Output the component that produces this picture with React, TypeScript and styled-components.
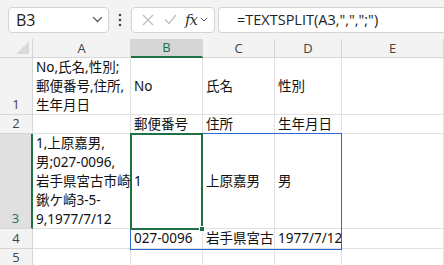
import styled, { createGlobalStyle } from "styled-components";

const Global = createGlobalStyle`
	html, body {
		margin: 0;
		padding: 0;
		background: #ffffff;
		overflow: hidden;
	}
	* { box-sizing: border-box; }
`;

const Page = styled.div`
	width: 444px;
	height: 265px;
	overflow: hidden;
	font-family: "Noto Sans", "Noto Sans CJK JP", sans-serif;
`;

const Toolbar = styled.div`
	height: 39px;
	background: #f3f3f3;
	display: flex;
	align-items: center;
	padding: 0 0 0 8px;
	font-family: "Open Sans", "Noto Sans", sans-serif;
`;

const Box = styled.div<{ $w?: number }>`
	height: 26px;
	width: ${(p) => (p.$w ? `${p.$w}px` : "auto")};
	flex: ${(p) => (p.$w ? "none" : "1 1 0")};
	min-width: 0;
	background: #ffffff;
	border: 1px solid #d4d4d4;
	border-radius: 4px;
	display: flex;
	align-items: center;
	overflow: hidden;
`;

const NameText = styled.span`
	font-size: 16px;
	color: #222;
	padding-left: 7px;
	flex: 1;
`;

const Dots = styled.div`
	width: 22px;
	flex: none;
	display: flex;
	justify-content: center;
`;

const FuncBox = styled(Box)`
	padding-left: 5px;
	margin-right: 3px;
`;

const IconSlot = styled.div<{ $w: number }>`
	width: ${(p) => p.$w}px;
	flex: none;
	display: flex;
	align-items: center;
	justify-content: center;
`;

const Fx = styled.span`
	font-family: "DejaVu Serif", "Liberation Serif", serif;
	font-style: italic;
	font-size: 15px;
	color: #333;
	letter-spacing: -1px;
	margin-left: 4px;
`;

const FormulaBox = styled(Box)`
	border-right: none;
	border-radius: 4px 0 0 4px;
	padding-left: 18px;
`;

const FormulaText = styled.span`
	font-size: 14.5px;
	color: #222;
	white-space: nowrap;
`;

const Grid = styled.div`
	display: grid;
	grid-template-columns: 33px 98px 72px 72px 67px 1fr;
	grid-template-rows: 19px 57px 19px 95px 20px 19px;
`;

type Pos = { $c: number; $r: number; $sel?: boolean };

const ColHead = styled.div<Pos>`
	grid-column: ${(p) => p.$c};
	grid-row: ${(p) => p.$r};
	background: ${(p) => (p.$sel ? "#d6d6d6" : "#f3f3f3")};
	color: ${(p) => (p.$sel ? "#1e7145" : "#444")};
	border-right: 1px solid #d6d6d6;
	border-bottom: ${(p) => (p.$sel ? "2px solid #1e7145" : "1px solid #d6d6d6")};
	font-family: "Open Sans", "Noto Sans", sans-serif;
	font-size: 13px;
	display: flex;
	align-items: center;
	justify-content: center;
	line-height: 1;
`;

const Corner = styled.div`
	grid-column: 1;
	grid-row: 1;
	background: #f3f3f3;
	border-right: 1px solid #d6d6d6;
	border-bottom: 1px solid #d6d6d6;
	display: flex;
	align-items: flex-end;
	justify-content: flex-end;
	padding: 0 3px 3px 0;
`;

const RowHead = styled.div<Pos>`
	grid-column: ${(p) => p.$c};
	grid-row: ${(p) => p.$r};
	background: ${(p) => (p.$sel ? "#e0e0e0" : "#f3f3f3")};
	color: ${(p) => (p.$sel ? "#1e7145" : "#444")};
	border-right: ${(p) => (p.$sel ? "2px solid #1e7145" : "1px solid #d6d6d6")};
	border-bottom: 1px solid #d6d6d6;
	font-family: "Open Sans", "Noto Sans", sans-serif;
	font-size: 13px;
	display: flex;
	align-items: flex-end;
	justify-content: center;
	padding-bottom: 1px;
	line-height: 17px;
`;

const Cell = styled.div<Pos>`
	grid-column: ${(p) => p.$c};
	grid-row: ${(p) => p.$r};
	border-right: 1px solid #e1e1e1;
	border-bottom: 1px solid #e1e1e1;
	font-size: 13.5px;
	line-height: 19px;
	color: #111;
	padding: 0 0 0 3px;
	display: flex;
	flex-direction: column;
	justify-content: center;
	white-space: nowrap;
	overflow: hidden;
`;

const Spill = styled.div`
	grid-column: 3 / 6;
	grid-row: 4 / 6;
	border: 1px solid #2c68d4;
	margin: -1px 0 -1px -1px;
	pointer-events: none;
	z-index: 1;
`;

const Active = styled.div`
	grid-column: 3 / 4;
	grid-row: 4 / 5;
	border: 2px solid #1e7145;
	margin: -1px 0 -1px -1px;
	position: relative;
	pointer-events: none;
	z-index: 2;
`;

const Handle = styled.div`
	position: absolute;
	right: -4px;
	bottom: -4px;
	width: 6px;
	height: 6px;
	background: #1e7145;
	border: 1px solid #fff;
`;

const Chevron = ({ size = 10 }: { size?: number }) => (
	<svg width={size} height={size * 0.6} viewBox="0 0 10 6">
		<path d="M1 1 L5 5 L9 1" fill="none" stroke="#555" strokeWidth="1.2" />
	</svg>
);

const cols = ["A", "B", "C", "D", "E"];

const rows: { n: string; cells: string[][] }[] = [
	{
		n: "1",
		cells: [["No,氏名,性別;", "郵便番号,住所,", "生年月日"], ["No"], ["氏名"], ["性別"], [""]],
	},
	{ n: "2", cells: [[""], ["郵便番号"], ["住所"], ["生年月日"], [""]] },
	{
		n: "3",
		cells: [
			["1,上原嘉男,", "男;027-0096,", "岩手県宮古市崎", "鍬ケ崎3-5-", "9,1977/7/12"],
			["1"],
			["上原嘉男"],
			["男"],
			[""],
		],
	},
	{ n: "4", cells: [[""], ["027-0096"], ["岩手県宮古市崎"], ["1977/7/12"], [""]] },
	{ n: "5", cells: [[""], [""], [""], [""], [""]] },
];

export default function App() {
	return (
		<Page>
			<Global />
			<Toolbar>
				<Box $w={101}>
					<NameText>B3</NameText>
					<IconSlot $w={22}>
						<Chevron size={11} />
					</IconSlot>
				</Box>
				<Dots>
					<svg width="4" height="14" viewBox="0 0 4 14">
						<circle cx="2" cy="2" r="1.3" fill="#444" />
						<circle cx="2" cy="7" r="1.3" fill="#444" />
						<circle cx="2" cy="12" r="1.3" fill="#444" />
					</svg>
				</Dots>
				<FuncBox $w={84}>
					<IconSlot $w={22}>
						<svg width="12" height="12" viewBox="0 0 12 12">
							<path d="M1 1 L11 11 M11 1 L1 11" stroke="#bdbdbd" strokeWidth="1.2" />
						</svg>
					</IconSlot>
					<IconSlot $w={22}>
						<svg width="13" height="11" viewBox="0 0 13 11">
							<path d="M1 5.5 L5 9.5 L12 1" fill="none" stroke="#bdbdbd" strokeWidth="1.2" />
						</svg>
					</IconSlot>
					<Fx>fx</Fx>
					<IconSlot $w={14}>
						<Chevron size={8} />
					</IconSlot>
				</FuncBox>
				<FormulaBox>
					<FormulaText>=TEXTSPLIT(A3,&quot;,&quot;,&quot;;&quot;)</FormulaText>
				</FormulaBox>
			</Toolbar>
			<Grid>
				<Corner>
					<svg width="13" height="13" viewBox="0 0 13 13">
						<path d="M13 0 L13 13 L0 13 Z" fill="#dadada" />
					</svg>
				</Corner>
				{cols.map((c, i) => (
					<ColHead key={c} $c={i + 2} $r={1} $sel={c === "B"}>
						{c}
					</ColHead>
				))}
				{rows.map((r, ri) => [
					<RowHead key={`h${r.n}`} $c={1} $r={ri + 2} $sel={r.n === "3"}>
						{r.n}
					</RowHead>,
					...r.cells.map((lines, i) => (
						<Cell key={`${r.n}-${i}`} $c={i + 2} $r={ri + 2}>
							{lines.map((l, j) => (
								<span key={j}>{l}</span>
							))}
						</Cell>
					)),
				])}
				<Spill />
				<Active>
					<Handle />
				</Active>
			</Grid>
		</Page>
	);
}
